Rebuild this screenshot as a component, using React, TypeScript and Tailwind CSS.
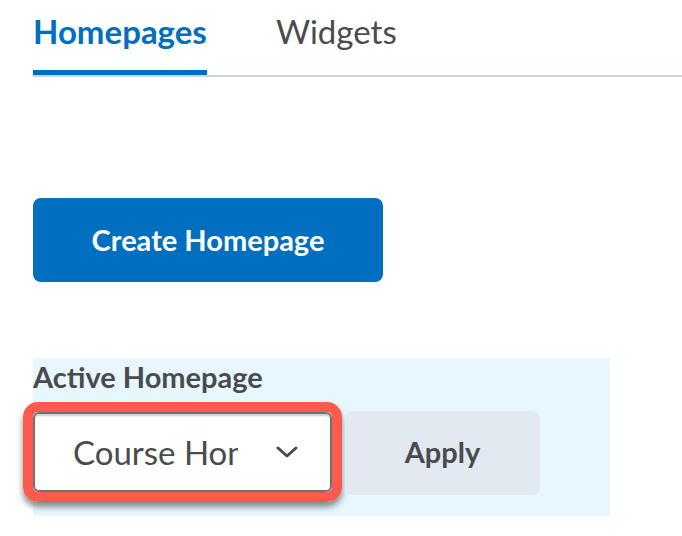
export default function App() {
  return (
    <div className="min-h-[536px] w-[682px] bg-white pl-[33px] font-['Lato','Liberation_Sans',sans-serif] text-[#494c4e]">
      {/* Tabs */}
      <div className="flex gap-[69px] border-b-2 border-[#cdd5dc]">
        <div className="flex flex-col">
          <span className="pt-[15px] text-[33px] font-bold leading-[33px] text-[#006fbf]">Homepages</span>
          <div className="mt-[22px] h-[5px] bg-[#006fbf]" />
        </div>
        <div className="flex flex-col">
          <span className="pt-[15px] text-[33px] leading-[33px]">Widgets</span>
        </div>
      </div>

      <button className="mt-[121px] flex h-[84px] w-[350px] items-center justify-center rounded-lg bg-[#006fbf] text-[29px] font-bold text-white">
        Create Homepage
      </button>

      {/* Active homepage panel */}
      <div className="mt-[76px] h-[158px] w-[577px] bg-[#e8f7ff]">
        <div className="pt-[4px] text-[29px] font-bold leading-[30px]">Active Homepage</div>
        <div className="mt-[10px] flex items-start">
          <div className="-ml-[10px] rounded-[15px] border-[10px] border-[#fb5a4c] shadow-[0_5px_6px_rgba(0,0,0,0.45)]">
            <div className="flex h-[80px] w-[299px] items-center rounded-[6px] border-2 border-[#6e7376] bg-white pl-[38px] pr-[32px] shadow-[inset_0_2px_2px_rgba(0,0,0,0.2)]">
              <span className="w-[165px] overflow-hidden whitespace-nowrap text-[33px] leading-none">
                Course Homepage
              </span>
              <svg className="ml-auto" width="22" height="12" viewBox="0 0 22 12" fill="none">
                <path d="M2 2l9 8 9-8" stroke="#494c4e" strokeWidth="3" strokeLinecap="round" strokeLinejoin="round" />
              </svg>
            </div>
          </div>
          <button className="ml-[3px] mt-[9px] flex h-[84px] w-[195px] items-center justify-center rounded-lg bg-[#e3e9f1] pb-[2px] text-[29px] font-bold">
            Apply
          </button>
        </div>
      </div>
    </div>
  );
}
